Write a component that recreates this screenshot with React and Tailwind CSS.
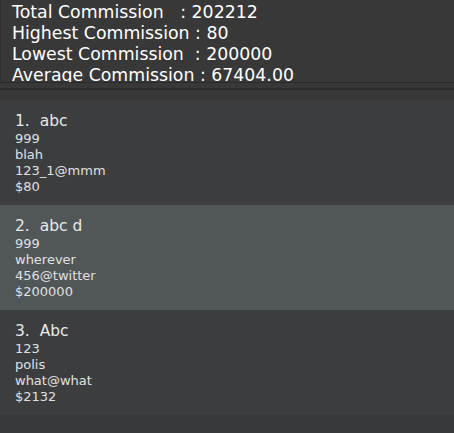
import React from 'react';

const stats = [
    'Total Commission   : 202212',
    'Highest Commission : 80',
    'Lowest Commission  : 200000',
    'Average Commission : 67404.00',
];

const people = [
    { name: 'abc', phone: '999', address: 'blah', email: '123_1@mmm', commission: '$80' },
    { name: 'abc d', phone: '999', address: 'wherever', email: '456@twitter', commission: '$200000' },
    { name: 'Abc', phone: '123', address: 'polis', email: 'what@what', commission: '$2132' },
];

const PersonCard = ({ person, index, selected }) => (
    <div
        className={`h-[105px] px-[15px] pt-[12px] ${
            selected ? 'bg-[#515658]' : 'bg-[#3c3d3f]'
        }`}
    >
        <div className="text-[15.5px] leading-[19px] text-[#e8e8e8] whitespace-pre">
            {`${index + 1}.  ${person.name}`}
        </div>
        <div className="text-[13px] leading-[16px] text-[#e0e0e0]">
            <div>{person.phone}</div>
            <div>{person.address}</div>
            <div>{person.email}</div>
            <div>{person.commission}</div>
        </div>
    </div>
);

export default function App() {
    return (
        <div
            className="w-[454px] h-[433px] bg-[#38393b] overflow-hidden"
            style={{ fontFamily: '"DejaVu Sans", sans-serif' }}
        >
            {/* stats panel */}
            <div className="h-[82px] overflow-hidden bg-[#383838] border-l border-[#2f2f2f] pl-[11px] pt-[1.5px] text-[17.33px] leading-[21px] text-white">
                {stats.map((line) => (
                    <div key={line} className="whitespace-pre">
                        {line}
                    </div>
                ))}
            </div>
            <div className="h-px bg-[#2b2b2b]" />
            <div className="h-[5px] bg-[#383838]" />
            <div className="h-[2px] bg-[#2b2b2b]" />
            <div className="h-[10px] bg-[#383838]" />

            {/* person list */}
            <div className="flex flex-col">
                {people.map((person, index) => (
                    <PersonCard
                        key={person.email}
                        person={person}
                        index={index}
                        selected={index === 1}
                    />
                ))}
            </div>
        </div>
    );
}
